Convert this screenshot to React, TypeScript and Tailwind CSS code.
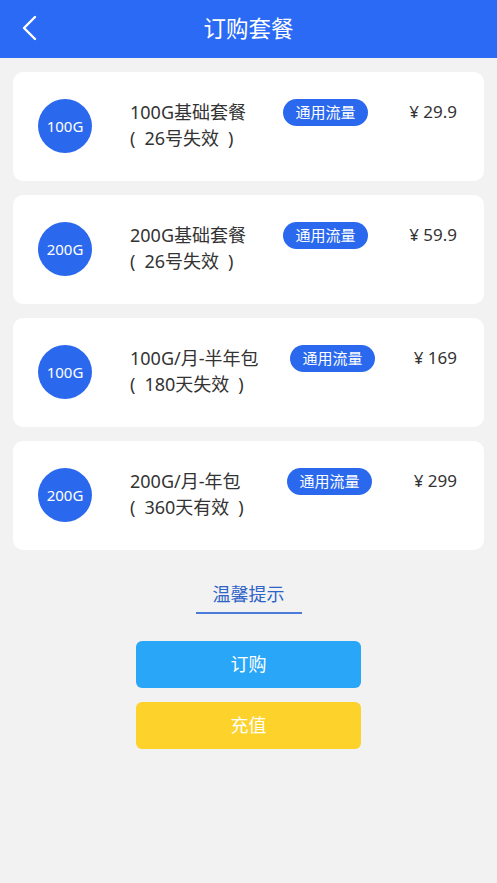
import React from "react";

const plans = [
  { size: "100G", title: "100G基础套餐", sub: "(\u200226号失效\u2002)", price: "¥ 29.9", badge: "ml-0" },
  { size: "200G", title: "200G基础套餐", sub: "(\u200226号失效\u2002)", price: "¥ 59.9", badge: "ml-0" },
  { size: "100G", title: "100G/月-半年包", sub: "(\u2002180天失效\u2002)", price: "¥ 169", badge: "ml-[7px]" },
  { size: "200G", title: "200G/月-年包", sub: "(\u2002360天有效\u2002)", price: "¥ 299", badge: "ml-[4px]" },
];

const font = { fontFamily: '"Noto Sans", "Noto Sans CJK SC", sans-serif' };

export default function App() {
  return (
    <div className="w-[497px] h-[883px] bg-[#f2f2f2] flex flex-col" style={font}>
      <div className="h-[58px] bg-[#2b6af5] flex items-center relative shrink-0">
        <svg className="absolute left-[20px] top-[15px]" width="18" height="26" viewBox="0 0 18 26" fill="none">
          <path d="M15 2 L4 13 L15 24" stroke="white" strokeWidth="2.4" strokeLinecap="round" strokeLinejoin="round" />
        </svg>
        <div className="flex-1 text-center text-white text-[22.5px] leading-none">订购套餐</div>
      </div>

      <div className="flex flex-col gap-[14px] px-[13px] pt-[14px]">
        {plans.map((p, i) => (
          <div key={i} className="h-[109px] bg-white rounded-[10px] flex items-start pt-[27px] pl-[25px] pr-[27px]">
            <div className="w-[54px] h-[54px] rounded-full bg-[#2a69ee] flex items-center justify-center text-white text-[15px] shrink-0">
              {p.size}
            </div>
            <div className="w-[153px] ml-[38px] flex flex-col items-start text-[#333] text-[18px] leading-[26px]">
              <div className="whitespace-nowrap">{p.title}</div>
              <div className="whitespace-nowrap">{p.sub}</div>
            </div>
            <div className={`h-[27px] w-[85px] rounded-full bg-[#2a69ee] text-white text-[15px] flex items-center justify-center ${p.badge}`}>
              通用流量
            </div>
            <div className="flex-1 text-right text-[#333] text-[17px] leading-[26px] whitespace-nowrap">{p.price}</div>
          </div>
        ))}
      </div>

      <div className="flex flex-col items-center mt-[31px]">
        <div className="text-[#2e63c8] text-[18px] leading-[26px]">温馨提示</div>
        <div className="w-[106px] h-[2px] bg-[#4a7bd8] mt-[5px]" />
        <button className="mt-[27px] w-[225px] h-[47px] rounded-[6px] bg-[#2aa6f8] text-white text-[18px]">订购</button>
        <button className="mt-[14px] w-[225px] h-[47px] rounded-[6px] bg-[#fdd22b] text-white text-[18px]">充值</button>
      </div>
    </div>
  );
}
